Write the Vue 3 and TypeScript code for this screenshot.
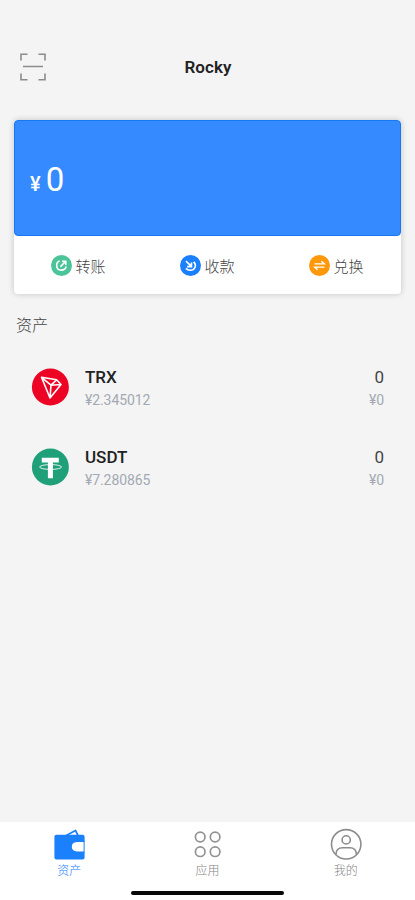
<script setup lang="ts">
interface Asset {
  symbol: string
  price: string
  amount: string
  value: string
}

interface Tab {
  id: 'assets' | 'apps' | 'mine'
  label: string
}

const assets: Asset[] = [
  { symbol: 'TRX', price: '¥2.345012', amount: '0', value: '¥0' },
  { symbol: 'USDT', price: '¥7.280865', amount: '0', value: '¥0' },
]

const actions = [
  { id: 'send', label: '转账' },
  { id: 'receive', label: '收款' },
  { id: 'swap', label: '兑换' },
]

const tabs: Tab[] = [
  { id: 'assets', label: '资产' },
  { id: 'apps', label: '应用' },
  { id: 'mine', label: '我的' },
]
const activeTab = 'assets'
</script>

<template>
  <div class="screen">
    <header class="header">
      <svg class="scan" viewBox="0 0 26 28" fill="none" stroke="#8c8c8c" stroke-width="1.6">
        <path d="M1 7.5V1.2H7.5M18.5 1.2H25V7.5M25 20.5V26.8H18.5M7.5 26.8H1V20.5M3 13.5H23" />
      </svg>
      <h1 class="title">Rocky</h1>
    </header>

    <section class="card">
      <div class="balance">
        <span class="yen">¥</span>
        <span class="total">0</span>
      </div>
      <div class="actions">
        <div v-for="action in actions" :key="action.id" class="action">
          <svg v-if="action.id === 'send'" class="action-icon" viewBox="0 0 22 22" fill="none" stroke="#fff" stroke-width="1.7">
            <circle cx="11" cy="11" r="11" fill="#4cc49a" stroke="none" />
            <path d="M9 6.3C4.8 7.5 4.7 15.8 10.5 15.9C13.7 16 15.5 14.2 15.8 12M9.8 12.3L15 7M11.5 6.5H15.5V10.5" />
          </svg>
          <svg v-else-if="action.id === 'receive'" class="action-icon" viewBox="0 0 22 22" fill="none" stroke="#fff" stroke-width="1.7">
            <circle cx="11" cy="11" r="11" fill="#1b80fb" stroke="none" />
            <path d="M14.3 7.2C18.2 11 15.2 16.2 10.7 16C8.8 15.9 7.3 15.2 6.2 14M6.3 6.4L11.6 11.7M12 7.8V12.2H7.4" />
          </svg>
          <svg v-else class="action-icon" viewBox="0 0 22 22" fill="none" stroke="#fff" stroke-width="1.5">
            <circle cx="11" cy="11" r="11" fill="#ff980b" stroke="none" />
            <path d="M5.8 9.3H16L13 6.6M16.2 12.7H6L9 15.4" />
          </svg>
          <span class="action-label">{{ action.label }}</span>
        </div>
      </div>
    </section>

    <h2 class="section-title">资产</h2>
    <main class="asset-list">
      <div v-for="asset in assets" :key="asset.symbol" class="asset">
        <svg v-if="asset.symbol === 'TRX'" class="coin" viewBox="0 0 38 38">
          <circle cx="19.4" cy="19" r="18.5" fill="#ed0425" />
          <path d="M10.5 9.3L25.6 11.8L30 16.5L19 30Z M10.5 9.3L20 17.2L30 16.5M25.6 11.8L20 17.2L19 30" fill="none" stroke="#fff" stroke-width="1.6" stroke-linejoin="round" />
        </svg>
        <svg v-else class="coin" viewBox="0 0 38 38">
          <circle cx="19.4" cy="19" r="18.5" fill="#1fa079" />
          <ellipse cx="19.6" cy="19" rx="11" ry="2.4" fill="none" stroke="#fff" stroke-opacity="0.85" stroke-width="1" />
          <path d="M10.8 9.8H27.8V14.5H21.9V30.3H16.9V14.5H10.8Z" fill="#fff" />
        </svg>
        <div class="asset-info">
          <span class="symbol">{{ asset.symbol }}</span>
          <span class="sub">{{ asset.price }}</span>
        </div>
        <div class="asset-amount">
          <span class="amount">{{ asset.amount }}</span>
          <span class="sub">{{ asset.value }}</span>
        </div>
      </div>
    </main>

    <footer class="footer">
      <nav class="tabs">
        <div v-for="tab in tabs" :key="tab.id" class="tab" :class="{ active: tab.id === activeTab }">
          <svg v-if="tab.id === 'assets'" class="tab-icon" viewBox="0 0 32 32">
            <path d="M13.2 7.5L22.5 2.5L25 7.5" fill="none" stroke="#1b80fb" stroke-width="1.7" stroke-linejoin="round" />
            <path d="M3.4 6.7H29.6Q31.6 6.7 31.6 8.7V14H24Q18.8 14.3 18.8 18.7T24 23.4H31.6V29.6Q31.6 31.6 29.6 31.6H3.4Q1.4 31.6 1.4 29.6V8.7Q1.4 6.7 3.4 6.7Z" fill="#1b80fb" />
            <path d="M31.1 13V24.5" stroke="#1b80fb" stroke-width="1" />
          </svg>
          <svg v-else-if="tab.id === 'apps'" class="tab-icon" viewBox="0 0 32 32" fill="none" stroke="#929292" stroke-width="1.7">
            <circle cx="9.2" cy="9" r="4.8" />
            <circle cx="24.1" cy="9" r="4.8" />
            <circle cx="9.2" cy="23.7" r="4.8" />
            <circle cx="24.1" cy="23.7" r="4.8" />
          </svg>
          <svg v-else class="tab-icon" viewBox="0 0 32 32" fill="none" stroke="#8c8c8c" stroke-width="1.6">
            <circle cx="16.2" cy="16.3" r="14.7" />
            <circle cx="16.2" cy="11.9" r="4.1" />
            <path d="M6 26.5C6 21.5 9.2 19.8 12.7 19.8H19.7C23.2 19.8 26.4 21.5 26.4 26.5" />
          </svg>
          <span class="tab-label">{{ tab.label }}</span>
        </div>
      </nav>
      <div class="home-indicator"></div>
    </footer>
  </div>
</template>

<style>
body {
  background: #f4f4f4;
}
</style>

<style scoped>
.screen {
  display: flex;
  flex-direction: column;
  height: 900px;
  box-sizing: border-box;
  padding-top: 45px;
  background: #f4f4f4;
  color: #222;
  font-family: Roboto, 'Noto Sans CJK SC', sans-serif;
}
.header {
  display: grid;
  grid-template-columns: 1fr auto 1fr;
  align-items: center;
  height: 44px;
  padding: 0 19px 0 20px;
}
.scan {
  width: 26px;
  height: 28px;
}
.title {
  margin: 0;
  font-size: 17px;
  font-weight: 600;
  letter-spacing: 0.05px;
}
.card {
  height: 174px;
  margin: 31px 14px 0;
  border-radius: 4px;
  background: #fff;
  box-shadow: 0 0 6px rgba(0, 0, 0, 0.2);
}
.balance {
  display: flex;
  align-items: baseline;
  gap: 5px;
  box-sizing: border-box;
  height: 116px;
  padding: 38px 15px 0;
  border: 1px solid #1479f2;
  border-radius: 4px;
  background: #358aff;
  color: #fff;
  line-height: 42px;
}
.yen {
  font-size: 20px;
  font-weight: 500;
}
.total {
  font-size: 33px;
}
.actions {
  display: grid;
  grid-template-columns: repeat(3, 1fr);
  height: 58px;
}
.action {
  display: flex;
  align-items: center;
  justify-content: center;
  gap: 3px;
  color: #444;
  font-size: 15px;
  font-weight: 300;
}
.action-icon {
  width: 21px;
  height: 21px;
}
.section-title {
  margin: 20px 16px 0;
  color: #444;
  font-size: 16px;
  font-weight: 300;
  line-height: 24px;
}
.asset-list {
  flex: 1;
  padding: 9px 31px 0;
}
.asset {
  display: flex;
  align-items: center;
  height: 80px;
}
.coin {
  width: 38px;
  height: 38px;
  margin-right: 16px;
}
.asset-info,
.asset-amount {
  display: flex;
  flex-direction: column;
  line-height: 23px;
  padding-top: 4px;
}
.asset-amount {
  margin-left: auto;
  align-items: flex-end;
}
.symbol {
  font-size: 17px;
  font-weight: 500;
}
.amount {
  color: #444;
  font-size: 17px;
}
.sub {
  color: #a3a9b2;
  font-size: 14px;
  letter-spacing: -0.1px;
}
.footer {
  height: 78px;
  background: #fff;
}
.tabs {
  display: grid;
  grid-template-columns: repeat(3, 1fr);
  height: 69px;
}
.tab {
  display: flex;
  flex-direction: column;
  align-items: center;
  padding-top: 6px;
  color: #858585;
}
.tab.active {
  color: #1b80fb;
}
.tab-icon {
  width: 32px;
  height: 32px;
}
.tab-label {
  margin-top: 2px;
  font-size: 12px;
  font-weight: 300;
  line-height: 18px;
}
.home-indicator {
  width: 153px;
  height: 4px;
  margin: 0 auto;
  border-radius: 2px;
  background: #080808;
}
</style>
